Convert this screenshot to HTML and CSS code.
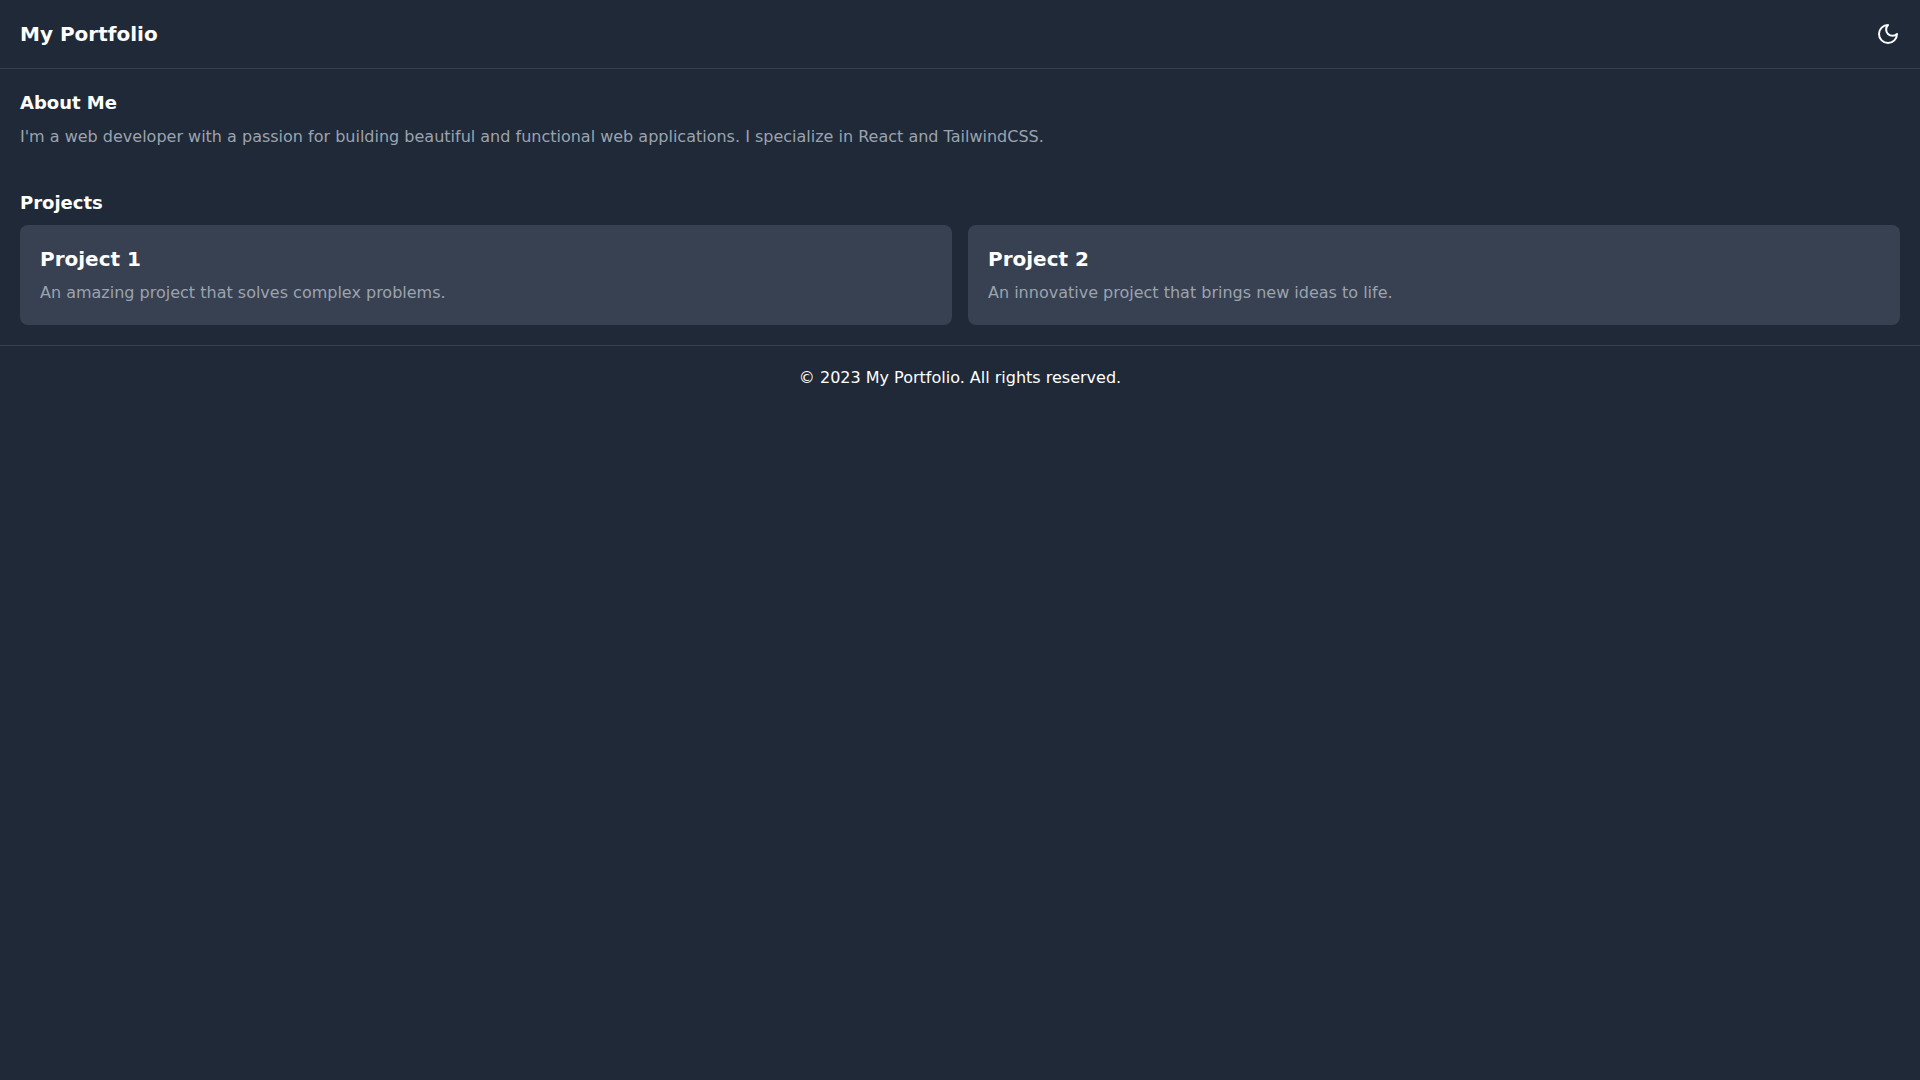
FILE: index.html
```html
<!DOCTYPE html>
<html lang="en">
<head>
  <meta charset="utf-8">
  <meta name="viewport" content="width=device-width, initial-scale=1">
  <title>My Portfolio</title>
  <link rel="stylesheet" href="styles.css">
</head>
<body>
  <header class="site-header">
    <h1 class="title">My Portfolio</h1>
    <button class="theme-toggle" type="button" aria-label="Toggle theme">
      <svg class="icon" viewBox="0 0 24 24" fill="none" stroke="currentColor" stroke-width="2" stroke-linecap="round" stroke-linejoin="round" aria-hidden="true">
        <path d="M12 3a6 6 0 0 0 9 9 9 9 0 1 1-9-9Z"/>
      </svg>
    </button>
  </header>
  <main>
    <section class="section">
      <h2 class="heading">About Me</h2>
      <p class="text">I'm a web developer with a passion for building beautiful and functional web applications. I specialize in React and TailwindCSS.</p>
    </section>
    <section class="section">
      <h2 class="heading">Projects</h2>
      <div class="projects">
        <article class="card">
          <h3 class="title card-title">Project 1</h3>
          <p class="text">An amazing project that solves complex problems.</p>
        </article>
        <article class="card">
          <h3 class="title card-title">Project 2</h3>
          <p class="text">An innovative project that brings new ideas to life.</p>
        </article>
      </div>
    </section>
  </main>
  <footer class="site-footer">
    <p>© 2023 My Portfolio. All rights reserved.</p>
  </footer>
</body>
</html>
```
FILE: styles.css
```css
*,
*::before,
*::after {
  box-sizing: border-box;
}

body {
  min-height: 100vh;
  margin: 0;
  background: #1f2937;
  color: #fff;
  font: 16px/24px "DejaVu Sans", sans-serif;
}

h1,
h2,
h3,
p {
  margin: 0;
}

.site-header {
  display: flex;
  align-items: center;
  justify-content: space-between;
  padding: 20px;
  border-bottom: 1px solid #374151;
}

.title {
  font-size: 20px;
  font-weight: 700;
  line-height: 28px;
}

.theme-toggle {
  padding: 0;
  border: 0;
  background: none;
  color: inherit;
  cursor: pointer;
}

.icon {
  display: block;
  width: 24px;
  height: 24px;
}

.section {
  padding: 20px;
}

.heading {
  margin-bottom: 8px;
  font-size: 18px;
  font-weight: 700;
  line-height: 28px;
}

.text {
  color: #9ca3af;
}

.projects {
  display: grid;
  grid-template-columns: repeat(2, minmax(0, 1fr));
  gap: 16px;
}

.card {
  padding: 20px;
  border-radius: 8px;
  background: #374151;
}

.card-title {
  margin-bottom: 8px;
}

.site-footer {
  padding: 20px;
  border-top: 1px solid #374151;
  text-align: center;
}

@media (max-width: 767px) {
  .projects {
    grid-template-columns: 1fr;
  }
}
```
